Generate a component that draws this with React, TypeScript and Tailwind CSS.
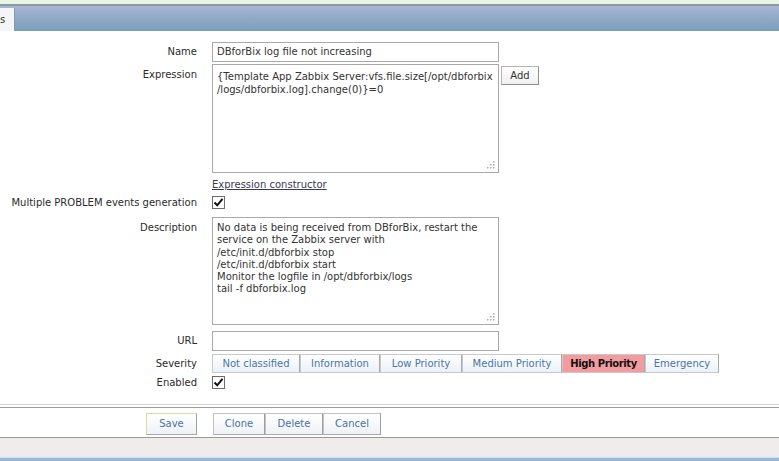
import React from "react";

const font = { fontFamily: '"DejaVu Sans", Verdana, sans-serif' };

function Grip() {
  // little dotted resize handle in the corner of textareas
  return (
    <svg className="absolute right-[3px] bottom-[3px]" width="9" height="9" viewBox="0 0 9 9">
      {[
        [7, 1],
        [7, 4],
        [4, 4],
        [7, 7],
        [4, 7],
        [1, 7],
      ].map(([x, y], i) => (
        <rect key={i} x={x} y={y} width="1.5" height="1.5" fill="#a9a9a9" />
      ))}
    </svg>
  );
}

function Check() {
  return (
    <span className="flex h-[13px] w-[13px] items-center justify-center border border-[#6d6d6d] bg-white">
      <svg width="11" height="11" viewBox="0 0 11 11">
        <path d="M1.5 5.5 L4.2 8.3 L9.5 1.8" fill="none" stroke="#111" strokeWidth="2" />
      </svg>
    </span>
  );
}

function Row({ label, children, labelTop = false, className = "" }: { label: string; children: React.ReactNode; labelTop?: boolean; className?: string }) {
  return (
    <div className={`flex ${labelTop ? "items-start" : "items-center"} ${className}`}>
      <div className={`w-[197px] shrink-0 text-right text-[#2b2b2b] ${labelTop ? "pt-[5px]" : ""}`}>{label}</div>
      <div className="ml-[15px] flex items-start">{children}</div>
    </div>
  );
}

const severities = [
  { name: "Not classified", w: "w-[88px]" },
  { name: "Information", w: "w-[80px]" },
  { name: "Low Priority", w: "w-[82px]" },
  { name: "Medium Priority", w: "w-[100px]" },
  { name: "High Priority", w: "w-[83px]", active: true },
  { name: "Emergency", w: "w-[74px]" },
];

const btn =
  "flex h-[22px] items-center justify-center border border-[#c3c3c3] border-r-[#9f9f9f] border-b-[#a9a9a9] bg-gradient-to-b from-white to-[#eef2f6] text-[#4a72a0]";

export default function App() {
  return (
    <div className="h-[461px] w-[779px] overflow-hidden bg-white text-[10px] leading-[12px]" style={font}>
      {/* header strip */}
      <div className="h-[4px] bg-[#eaf5ea]" />
      <div className="h-[2px] bg-[#8d9c98]" />
      <div className="flex h-[25px] bg-gradient-to-b from-[#aab3d8] via-[#8fa9c6] to-[#7a9dbd]">
        <div className="mt-[2px] flex h-[23px] w-[15px] items-center border-r border-[#8d9aa6] bg-[#f3f5f7] text-[#333]">
          s
        </div>
      </div>

      {/* form */}
      <div className="pt-[11px]">
        <Row label="Name">
          <div className="flex h-[20px] w-[287px] items-center border border-[#a9a9a9] pl-[4px] text-[#333]">
            DBforBix log file not increasing
          </div>
        </Row>

        <Row label="Expression" labelTop className="mt-[2px]">
          <div className="relative h-[109px] w-[287px] border border-[#a9a9a9] px-[4px] pt-[5px] leading-[13px] text-[#333]">
            {"{Template App Zabbix Server:vfs.file.size[/opt/dbforbix"}
            <br />
            {"/logs/dbforbix.log].change(0)}=0"}
            <Grip />
          </div>
          <div className="ml-[2px] mt-[2px] flex h-[19px] w-[38px] items-center justify-center border border-[#b5b5b5] border-r-[#8f8f8f] border-b-[#8f8f8f] bg-gradient-to-b from-white to-[#f0f0f0] text-[#333]">
            Add
          </div>
        </Row>

        <Row label="" className="mt-[6px]">
          <span className="text-[#3a3a55] underline">Expression constructor</span>
        </Row>

        <Row label="Multiple PROBLEM events generation" className="mt-[5px]">
          <Check />
        </Row>

        <Row label="Description" labelTop className="mt-[8px]">
          <div className="relative h-[108px] w-[287px] border border-[#a9a9a9] px-[4px] pt-[4px] leading-[12.3px] text-[#333]">
            No data is being received from DBforBix, restart the
            <br />
            service on the Zabbix server with
            <br />
            /etc/init.d/dbforbix stop
            <br />
            /etc/init.d/dbforbix start
            <br />
            Monitor the logfile in /opt/dbforbix/logs
            <br />
            tail -f dbforbix.log
            <Grip />
          </div>
        </Row>

        <Row label="URL" className="mt-[6px]">
          <div className="h-[20px] w-[287px] border border-[#a9a9a9]" />
        </Row>

        <Row label="Severity" className="mt-[3px]">
          <div className="flex">
            {severities.map((s) => (
              <div
                key={s.name}
                className={`${s.w} flex h-[19px] items-center justify-center border border-[#c9c9c9] border-r-[#a9a9a9] ${
                  s.active
                    ? "bg-[#f29ca0] text-[#111] font-bold tracking-[-0.4px]"
                    : "bg-gradient-to-b from-white to-[#eaf1f8] text-[#4a76a6]"
                }`}
              >
                {s.name}
              </div>
            ))}
          </div>
        </Row>

        <Row label="Enabled" className="mt-[3px]">
          <Check />
        </Row>
      </div>

      {/* footer */}
      <div className="mt-[15px] h-[1px] bg-[#d4d4d4]" />
      <div className="mt-[2px] h-[1px] bg-[#9c9c9c]" />
      <div className="flex h-[29px] items-start pt-[5px]">
        <div className="flex w-[197px] justify-end">
          <div className={`${btn} w-[51px] border-[#d9dc9a]`}>Save</div>
        </div>
        <div className="ml-[16px] flex">
          <div className={`${btn} w-[52px]`}>Clone</div>
          <div className={`${btn} w-[58px]`}>Delete</div>
          <div className={`${btn} w-[58px]`}>Cancel</div>
        </div>
      </div>
      <div className="h-[1px] bg-[#9a9a9a]" />
      <div className="h-[19px] bg-[#eeedeb]" />
      <div className="h-[1px] bg-[#cfdce9]" />
      <div className="h-[10px] bg-gradient-to-b from-[#9cbbd9] to-[#86aad0]" />
    </div>
  );
}
